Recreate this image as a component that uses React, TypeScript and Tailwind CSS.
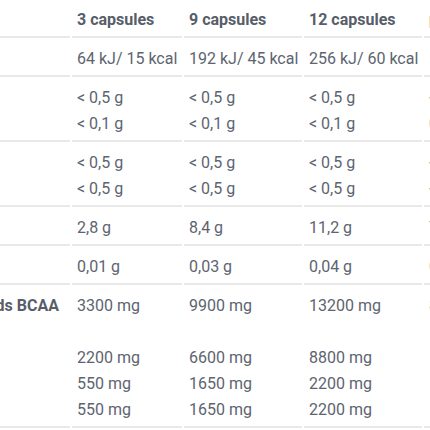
const columns = ['3 capsules', '9 capsules', '12 capsules', 'per 100 g']

type Row = { label: string[]; values: string[][] }

const rows: Row[] = [
  { label: ['Energy'], values: [['64 kJ/ 15 kcal'], ['192 kJ/ 45 kcal'], ['256 kJ/ 60 kcal'], ['1641 kJ/ 386 kcal']] },
  {
    label: ['Fat', 'of which saturates'],
    values: [['< 0,5 g', '< 0,1 g'], ['< 0,5 g', '< 0,1 g'], ['< 0,5 g', '< 0,1 g'], ['< 0,5 g', '0,1 g']],
  },
  {
    label: ['Carbohydrate', 'of which sugars'],
    values: [['< 0,5 g', '< 0,5 g'], ['< 0,5 g', '< 0,5 g'], ['< 0,5 g', '< 0,5 g'], ['< 0,5 g', '< 0,5 g']],
  },
  { label: ['Protein'], values: [['2,8 g'], ['8,4 g'], ['11,2 g'], ['72 g']] },
  { label: ['Salt'], values: [['0,01 g'], ['0,03 g'], ['0,04 g'], ['0,26 g']] },
]

const bcaa = {
  values: [
    ['3300 mg', '', '2200 mg', '550 mg', '550 mg'],
    ['9900 mg', '', '6600 mg', '1650 mg', '1650 mg'],
    ['13200 mg', '', '8800 mg', '2200 mg', '2200 mg'],
    ['85 g', '', '56,6 g', '14,1 g', '14,1 g'],
  ],
}

const widths = ['w-[220px]', 'w-[110px]', 'w-[118px]', 'w-[118px]', 'w-[118px]']

function Lines({ lines }: { lines: string[] }) {
  return (
    <>
      {lines.map((l, i) => (
        <div key={i} className="h-[26px] whitespace-nowrap">
          {l}
        </div>
      ))}
    </>
  )
}

export default function App() {
  const cell = 'align-top pl-[5px] pr-[5px] pt-[8px] pb-[3px] border-b-2 border-[#e9e9e9]'

  return (
    <div
      className="w-[430px] h-[430px] overflow-hidden bg-white text-[16px] leading-[26px] text-[#5d6470]"
      style={{ fontFamily: 'Roboto, "Open Sans", Arial, sans-serif' }}
    >
      <table className="-ml-[152px] w-[696px] table-fixed border-separate border-spacing-x-[2px] border-spacing-y-0 text-left">
        <colgroup>
          {widths.map((w, i) => (
            <col key={i} className={w} />
          ))}
        </colgroup>
        <thead>
          <tr>
            <th className="align-top pl-[5px] pt-[7px] pb-[3px] border-b-2 border-[#e9e9e9]" />
            {columns.map((c) => (
              <th
                key={c}
                className="align-top pl-[5px] pt-[7px] pb-[3px] border-b-2 border-[#e9e9e9] font-bold text-[#575e69] whitespace-nowrap"
              >
                {c}
              </th>
            ))}
          </tr>
        </thead>
        <tbody>
          {rows.map((r) => (
            <tr key={r.label[0]}>
              <td className={cell}>
                <Lines lines={r.label} />
              </td>
              {r.values.map((v, i) => (
                <td key={i} className={cell}>
                  <Lines lines={v} />
                </td>
              ))}
            </tr>
          ))}
          <tr>
            <td className="align-top pl-[5px] pr-[11px] pt-[8px] pb-[3px] border-b-2 border-[#e9e9e9] font-bold text-[#575e69]">
              <div className="flex h-[26px] justify-end whitespace-nowrap">
                <span>Branched-chain amino acids BCAA</span>
              </div>
            </td>
            {bcaa.values.map((v, i) => (
              <td key={i} className={cell}>
                <Lines lines={v} />
              </td>
            ))}
          </tr>
        </tbody>
      </table>
    </div>
  )
}
